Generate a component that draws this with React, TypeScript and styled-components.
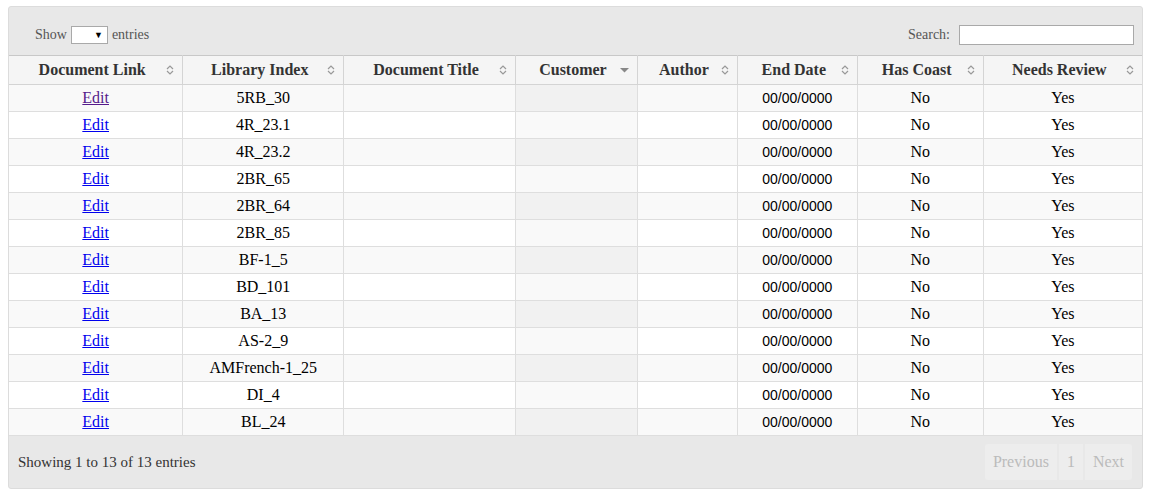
import React from "react";
import styled, { createGlobalStyle } from "styled-components";

const Global = createGlobalStyle`
  html, body { margin: 0; padding: 0; background: #fff; }
  body { font-family: "Liberation Serif", "Times New Roman", serif; }
`;

const Page = styled.div`
  padding: 6px 8px 0 8px;
`;

const Wrapper = styled.div`
  background: #e8e8e8;
  border: 1px solid #dcdcdc;
  border-radius: 3px;
  width: 1135px;
  box-sizing: border-box;
`;

const TopBar = styled.div`
  display: flex;
  justify-content: space-between;
  align-items: center;
  height: 48px;
  padding: 7px 8px 0 26px;
  box-sizing: border-box;
  color: #555;
  font-size: 14px;
`;

const Label = styled.label`
  display: flex;
  align-items: center;
  gap: 4px;
`;

const Select = styled.div`
  width: 37px;
  height: 18px;
  box-sizing: border-box;
  border: 1px solid #a9a9a9;
  background: #fff;
  display: flex;
  justify-content: flex-end;
  align-items: center;
  padding-right: 4px;
  font-size: 9px;
  color: #000;
`;

const SearchInput = styled.input`
  width: 175px;
  height: 20px;
  box-sizing: border-box;
  border: 1px solid #a9a9a9;
  margin-left: 5px;
`;

const Table = styled.table`
  width: 100%;
  border-collapse: collapse;
  background: #fff;
  font-size: 16px;
`;

const Th = styled.th<{ $w: number }>`
  width: ${(p) => p.$w}px;
  height: 29px;
  box-sizing: border-box;
  background: #f5f5f5;
  border: 1px solid #d4d4d4;
  border-top: 1px solid #c8c8c8;
  color: #333;
  font-weight: bold;
  font-size: 16px;
  position: relative;
  padding: 0 17px 1px 10px;
  &:first-child { border-left: none; }
  &:last-child { border-right: none; }
`;

const SortIcon = styled.span`
  position: absolute;
  right: 8px;
  top: 50%;
  transform: translateY(-50%);
  display: flex;
`;

const Row = styled.tr<{ $odd: boolean }>`
  background: ${(p) => (p.$odd ? "#f9f9f9" : "#fff")};
`;

const Td = styled.td<{ $sorted?: boolean; $odd?: boolean; $sans?: boolean }>`
  height: 27px;
  box-sizing: border-box;
  border: 1px solid #dedede;
  text-align: center;
  padding: 0 4px 1px;
  color: #000;
  background: ${(p) => (p.$sorted ? (p.$odd ? "#f1f1f1" : "#f9f9f9") : "transparent")};
  font-family: ${(p) => (p.$sans ? '"Liberation Sans", Arial, sans-serif' : "inherit")};
  font-size: ${(p) => (p.$sans ? "14px" : "16px")};
  &:first-child { border-left: none; }
  &:last-child { border-right: none; }
  border-top: none;
`;

const Link = styled.a<{ $visited?: boolean }>`
  color: ${(p) => (p.$visited ? "#551a8b" : "#0000ee")};
  text-decoration: underline;
`;

const Footer = styled.div`
  display: flex;
  justify-content: space-between;
  align-items: center;
  height: 52px;
  padding: 0 10px 0 9px;
  box-sizing: border-box;
  color: #333;
  font-size: 15px;
`;

const Pager = styled.div`
  display: flex;
  height: 36px;
  background: #ededed;
  border-radius: 3px;
  color: #bbb;
  font-size: 16px;
  margin-top: -1px;
`;

const PageBtn = styled.span<{ $mid?: boolean }>`
  display: flex;
  align-items: center;
  padding: 0 8px;
  border-left: ${(p) => (p.$mid ? "2px solid #e8e8e8" : "none")};
  border-right: ${(p) => (p.$mid ? "2px solid #e8e8e8" : "none")};
`;

const BothArrows = () => (
  <svg width="8" height="12" viewBox="0 0 8 12">
    <path d="M1 5 L4 2 L7 5" fill="none" stroke="#999" strokeWidth="1.2" />
    <path d="M1 7 L4 10 L7 7" fill="none" stroke="#999" strokeWidth="1.2" />
  </svg>
);

const DownArrow = () => (
  <svg width="9" height="6" viewBox="0 0 9 6">
    <path d="M0 1 L9 1 L4.5 5.5 Z" fill="#888" />
  </svg>
);

const columns: { title: string; w: number; sorted?: boolean }[] = [
  { title: "Document Link", w: 174 },
  { title: "Library Index", w: 161 },
  { title: "Document Title", w: 172 },
  { title: "Customer", w: 122, sorted: true },
  { title: "Author", w: 100 },
  { title: "End Date", w: 120 },
  { title: "Has Coast", w: 126 },
  { title: "Needs Review", w: 159 },
];

const indexes = [
  "5RB_30",
  "4R_23.1",
  "4R_23.2",
  "2BR_65",
  "2BR_64",
  "2BR_85",
  "BF-1_5",
  "BD_101",
  "BA_13",
  "AS-2_9",
  "AMFrench-1_25",
  "DI_4",
  "BL_24",
];

export default function App() {
  return (
    <>
      <Global />
      <Page>
        <Wrapper>
          <TopBar>
            <Label>
              Show
              <Select>▼</Select>
              entries
            </Label>
            <Label>
              Search:
              <SearchInput type="text" />
            </Label>
          </TopBar>
          <Table>
            <thead>
              <tr>
                {columns.map((c) => (
                  <Th key={c.title} $w={c.w}>
                    {c.title}
                    <SortIcon>{c.sorted ? <DownArrow /> : <BothArrows />}</SortIcon>
                  </Th>
                ))}
              </tr>
            </thead>
            <tbody>
              {indexes.map((idx, i) => {
                const odd = i % 2 === 0;
                return (
                  <Row key={idx} $odd={odd}>
                    <Td>
                      <Link href="#" $visited={i === 0}>
                        Edit
                      </Link>
                    </Td>
                    <Td>{idx}</Td>
                    <Td></Td>
                    <Td $sorted $odd={odd}></Td>
                    <Td></Td>
                    <Td $sans>00/00/0000</Td>
                    <Td>No</Td>
                    <Td>Yes</Td>
                  </Row>
                );
              })}
            </tbody>
          </Table>
          <Footer>
            <span>Showing 1 to 13 of 13 entries</span>
            <Pager>
              <PageBtn>Previous</PageBtn>
              <PageBtn $mid>1</PageBtn>
              <PageBtn>Next</PageBtn>
            </Pager>
          </Footer>
        </Wrapper>
      </Page>
    </>
  );
}
